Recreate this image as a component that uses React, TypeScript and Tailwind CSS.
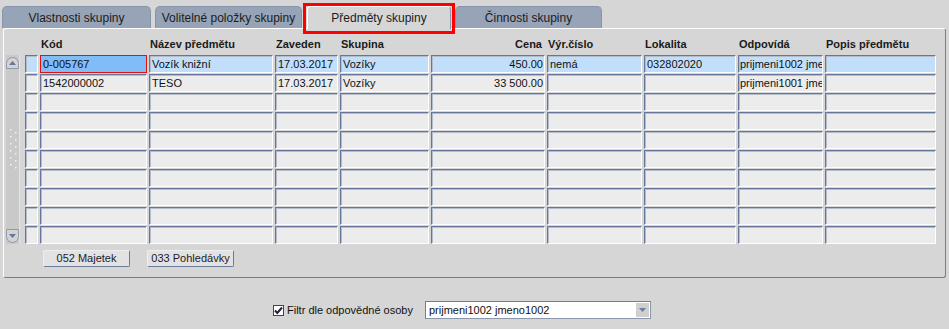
import React from "react";

const font = "font-['Liberation_Sans',Arial,sans-serif]";

type Col = { w: string; label: string; right?: boolean; small?: boolean };

const cols: Col[] = [
  { w: "w-[107px]", label: "Kód" },
  { w: "w-[124px]", label: "Název předmětu" },
  { w: "w-[63px]", label: "Zaveden" },
  { w: "w-[89px]", label: "Skupina" },
  { w: "w-[114px]", label: "Cena", right: true },
  { w: "w-[95px]", label: "Výr.číslo" },
  { w: "w-[92px]", label: "Lokalita" },
  { w: "w-[85px]", label: "Odpovídá", small: true },
  { w: "w-[111px]", label: "Popis předmětu" },
];

const rows: string[][] = [
  ["0-005767", "Vozík knižní", "17.03.2017", "Vozíky", "450.00", "nemá", "032802020", "prijmeni1002 jmeno1002", ""],
  ["1542000002", "TESO", "17.03.2017", "Vozíky", "33 500.00", "", "", "prijmeni1001 jmeno1001", ""],
];

const cellBase =
  "h-[18px] border border-t-[#66769a] border-l-[#66769a] border-r-white border-b-white shadow-[inset_1px_1px_0_#b3bccb] overflow-hidden whitespace-nowrap text-[11px] leading-[16px] text-[#111]";

function Tab({ label, w, ml }: { label: string; w: string; ml: string }) {
  return (
    <div
      className={`${w} ${ml} h-[22px] rounded-t-[5px] bg-[#97a3b6] border border-b-0 border-[#8794aa] flex items-center justify-center text-[12px] text-[#1c1c1c]`}
    >
      {label}
    </div>
  );
}

function Scrollbar() {
  return (
    <div className="w-[14px] h-[189px] bg-[#c9c9c9] border-r border-r-[#e4e4e4] flex flex-col items-center justify-between">
      <div className="mt-[2px] w-[13px] h-[12px] rounded-t-[7px] border border-[#8e9ab0] bg-[#d3d3d3] flex items-center justify-center">
        <svg width="7" height="4" viewBox="0 0 7 4">
          <path d="M0 4 L3.5 0 L7 4 Z" fill="#66769a" />
        </svg>
      </div>
      <svg width="10" height="44" viewBox="0 0 10 44">
        {[0, 1, 2, 3, 4, 5].map((i) => (
          <React.Fragment key={i}>
            <rect x="2" y={2 + i * 7} width="1.5" height="1.5" fill="#f4f4f4" />
            <rect x="7" y={5 + i * 7} width="1.5" height="1.5" fill="#f4f4f4" />
          </React.Fragment>
        ))}
      </svg>
      <div className="mb-[1px] w-[13px] h-[14px] rounded-b-[7px] border border-[#8e9ab0] bg-[#d3d3d3] flex items-center justify-center">
        <svg width="7" height="4" viewBox="0 0 7 4">
          <path d="M0 0 L3.5 4 L7 0 Z" fill="#66769a" />
        </svg>
      </div>
    </div>
  );
}

function Button({ label }: { label: string }) {
  return (
    <div className="w-[87px] h-[17px] rounded-[2px] border border-t-[#eeeeee] border-l-[#eeeeee] border-r-[#6b7b99] border-b-[#6b7b99] bg-[#e2e2e2] flex items-center justify-center text-[11px] text-[#1a1a2a]">
      {label}
    </div>
  );
}

export default function App() {
  return (
    <div className={`w-[949px] h-[329px] bg-[#d6d6d6] ${font} overflow-hidden`}>
      {/* Tabs */}
      <div className="h-[28px] flex items-end">
        <Tab label="Vlastnosti skupiny" w="w-[149px]" ml="ml-[2px]" />
        <Tab label="Volitelné položky skupiny" w="w-[147px]" ml="ml-[4px]" />
        <div className="relative ml-[1px] w-[152px] h-[23px] flex justify-center">
          <div className="w-[144px] h-[23px] mt-[1px] rounded-t-[4px] bg-[#d6d6d6] border border-b-0 border-t-white border-l-white border-r-[#8794aa] flex items-center justify-center text-[12px] text-[#1c1c1c] relative z-10">
            Předměty skupiny
          </div>
          <div className="absolute left-0 right-0 top-[-2px] bottom-[-6px] border-[3px] border-[#ff0000] z-20" />
        </div>
        <Tab label="Činnosti skupiny" w="w-[147px]" ml="ml-0" />
      </div>

      {/* Panel */}
      <div className="ml-[3px] w-[943px] h-[250px] border border-t-white border-l-white border-r-[#6e7f9d] border-b-[#6e7f9d] rounded-[3px] pt-[8px]">
        {/* Header */}
        <div className="flex h-[14px] items-center text-[11px] font-bold text-[#1a1a1a] leading-[14px]">
          <div className="w-[36px] shrink-0" />
          <div className="flex gap-[2px]">
            {cols.map((c, i) => (
              <div key={i} className={`${c.w} shrink-0 ${c.right ? "text-right pr-[3px]" : "pl-[1px]"} whitespace-nowrap`}>
                {c.label}
              </div>
            ))}
          </div>
        </div>

        {/* Grid */}
        <div className="mt-[4px] flex items-start">
          <div className="ml-[2px]">
            <Scrollbar />
          </div>
          <div className="ml-[5px] flex flex-col gap-[1px]">
            {Array.from({ length: 10 }).map((_, r) => {
              const data = rows[r];
              const sel = r === 0;
              return (
                <div key={r} className="flex gap-[2px]">
                  <div className={`${cellBase} w-[13px] ${sel ? "bg-[#c1dffb]" : "bg-[#ececec]"}`} />
                  {cols.map((c, ci) => {
                    const v = data ? data[ci] : "";
                    const focus = sel && ci === 0;
                    return (
                      <div
                        key={ci}
                        className={`${cellBase} ${c.w} shrink-0 ${
                          focus
                            ? "!border-[#e01010] !shadow-none bg-[#80bcf7]"
                            : sel
                            ? "bg-[#c1dffb]"
                            : "bg-[#ececec]"
                        } ${c.right ? "text-right pr-[1px]" : c.small ? "pl-[1px]" : "pl-[2px]"}`}
                      >
                        {v}
                      </div>
                    );
                  })}
                </div>
              );
            })}
          </div>
        </div>

        {/* Buttons */}
        <div className="mt-[6px] ml-[39px] flex gap-[17px]">
          <Button label="052 Majetek" />
          <Button label="033 Pohledávky" />
        </div>
      </div>

      {/* Filter */}
      <div className="mt-[23px] pl-[273px] flex items-center h-[18px]">
        <svg width="11" height="11" viewBox="0 0 11 11" className="shrink-0">
          <rect x="0.5" y="0.5" width="10" height="10" fill="#ffffff" stroke="#3a4466" />
          <path d="M2 5.5 L4.3 8 L9 2.5" stroke="#1e2340" strokeWidth="2" fill="none" />
        </svg>
        <span className="ml-[3px] text-[11px] text-[#111]">Filtr dle odpovědné osoby</span>
        <div className="ml-[12px] w-[226px] h-[18px] bg-white border border-t-[#6d7d9b] border-l-[#6d7d9b] border-r-[#8a97ad] border-b-[#8a97ad] flex items-center">
          <span className="pl-[3px] flex-1 text-[11px] text-[#111] whitespace-nowrap">prijmeni1002 jmeno1002</span>
          <div className="w-[13px] h-[14px] mr-[1px] bg-[#d0d0d0] flex items-center justify-center">
            <svg width="7" height="4" viewBox="0 0 7 4">
              <path d="M0 0 L3.5 4 L7 0 Z" fill="#6e7d99" />
            </svg>
          </div>
        </div>
      </div>
    </div>
  );
}
